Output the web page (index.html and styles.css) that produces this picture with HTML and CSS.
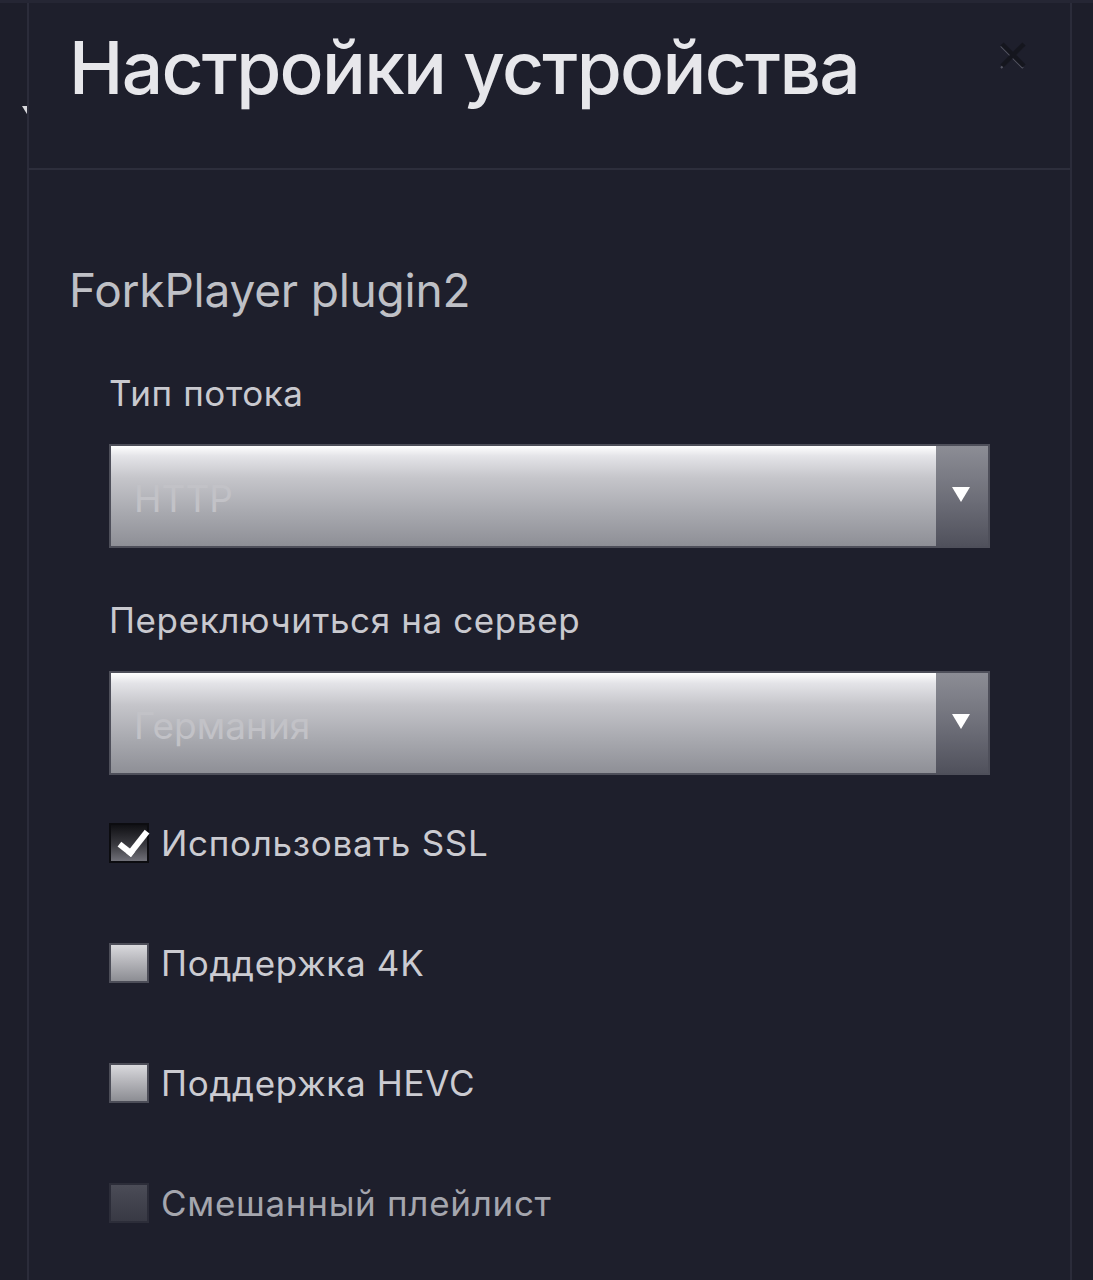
FILE: index.html
```html
<!DOCTYPE html>
<html lang="ru">
<head>
    <meta charset="UTF-8">
    <meta name="viewport" content="width=device-width, initial-scale=1.0">
    <title>Настройки устройства</title>
    <link rel="stylesheet" href="styles.css">
</head>
<body>
    <!-- page behind the dialog, only a sliver of it shows -->
    <div class="backdrop">
        <span class="backdrop-arrow"></span>
    </div>

    <div class="modal">
        <div class="modal-header">
            <h1>Настройки устройства</h1>
            <button type="button" class="close-btn" aria-label="Закрыть">
                <svg width="30" height="30" viewBox="0 0 30 30">
                    <path d="M3 5 L25 27 M25 5 L3 27" stroke="#555663" stroke-width="2" fill="none"/>
                    <path d="M4 3 L26 25 M26 3 L4 25" stroke="#15161e" stroke-width="4.5" fill="none"/>
                </svg>
            </button>
        </div>

        <div class="modal-body">
            <h2>ForkPlayer plugin2</h2>

            <form class="settings">
                <label class="field-label" for="streamType">Тип потока</label>
                <div class="select-box">
                    <select id="streamType">
                        <option>HTTP</option>
                        <option>HLS</option>
                    </select>
                    <span class="select-arrow"></span>
                </div>

                <label class="field-label" for="server">Переключиться на сервер</label>
                <div class="select-box">
                    <select id="server">
                        <option>Германия</option>
                        <option>Нидерланды</option>
                    </select>
                    <span class="select-arrow"></span>
                </div>

                <label class="check-row">
                    <input type="checkbox" checked>
                    <span class="check-box"></span>
                    Использовать SSL
                </label>

                <label class="check-row">
                    <input type="checkbox">
                    <span class="check-box"></span>
                    Поддержка 4K
                </label>

                <label class="check-row">
                    <input type="checkbox">
                    <span class="check-box"></span>
                    Поддержка HEVC
                </label>

                <label class="check-row disabled">
                    <input type="checkbox" disabled>
                    <span class="check-box"></span>
                    Смешанный плейлист
                </label>
            </form>
        </div>
    </div>
</body>
</html>
```

FILE: styles.css
```css
/* Dark TV-style settings dialog */
body {
    margin: 0;
    padding: 0;
    background-color: #1d1e2a;
    font-family: 'Inter', 'Liberation Sans', sans-serif;
    color: #c9c9cf;
    height: 1280px;
    overflow: hidden;
    border-top: 3px solid #252634;
    box-sizing: border-box;
}

.backdrop {
    position: absolute;
    top: 0;
    left: 0;
    width: 30px;
    height: 200px;
}

.backdrop-arrow {
    position: absolute;
    left: 22px;
    top: 106px;
    width: 0;
    height: 0;
    border-left: 8px solid transparent;
    border-right: 8px solid transparent;
    border-top: 13px solid #d8d8dc;
}

.modal {
    position: relative;
    margin-left: 27px;
    width: 1041px;
    height: 1277px;
    background-color: #1e1f2c;
    border-left: 2px solid #2b2c3a;
    border-right: 2px solid #2b2c3a;
}

.modal-header {
    display: flex;
    justify-content: space-between;
    align-items: flex-start;
    height: 165px;
    padding: 0 42px 0 40px;
    border-bottom: 2px solid #2d2e3c;
}

h1 {
    margin: 10px 0 0 0;
    font-size: 73px;
    font-weight: 500;
    color: #e7e7eb;
    letter-spacing: -1.7px;
    line-height: 110px;
}

.close-btn {
    margin-top: 38px;
    padding: 0;
    background: none;
    border: none;
    cursor: pointer;
}

.modal-body {
    padding: 92px 40px 0 40px;
}

h2 {
    margin: 0;
    font-size: 46px;
    font-weight: 400;
    color: #bfc0c6;
    line-height: 56px;
    letter-spacing: -0.2px;
}

.settings {
    display: flex;
    flex-direction: column;
    padding: 0 40px 0 40px;
}

.field-label {
    margin-top: 51px;
    font-size: 35px;
    line-height: 48px;
    color: #c9c9cf;
    letter-spacing: 0.6px;
}

.field-label + .select-box {
    margin-top: 27px;
}

.select-box + .field-label {
    margin-top: 48px;
}

.select-box {
    position: relative;
    height: 100px;
    border: 2px solid #4e4f5a;
    display: flex;
}

.select-box select {
    flex: 1;
    appearance: none;
    -webkit-appearance: none;
    border: none;
    outline: none;
    padding: 4px 0 0 23px;
    font-family: 'Inter', 'Liberation Sans', sans-serif;
    font-size: 37px;
    color: #c2c2c7;
    background: linear-gradient(to bottom, #ffffff 0%, #e4e4e8 10%, #c5c5ca 32%, #a9aab0 65%, #8e8f96 100%);
}

.select-arrow {
    width: 52px;
    position: relative;
    background: linear-gradient(to bottom, #8c8d95 0%, #6c6d77 55%, #50515c 100%);
}

.select-arrow::after {
    content: "";
    position: absolute;
    left: 16px;
    top: 41px;
    border-left: 9px solid transparent;
    border-right: 9px solid transparent;
    border-top: 15px solid #ffffff;
}

.check-row {
    display: flex;
    align-items: center;
    gap: 12px;
    height: 40px;
    margin-top: 80px;
    font-size: 35px;
    color: #cbcbd1;
    letter-spacing: 0.7px;
    cursor: pointer;
}

.select-box + .check-row {
    margin-top: 48px;
}

.check-row input {
    display: none;
}

.check-box {
    position: relative;
    width: 36px;
    height: 36px;
    border: 2px solid #4c4d58;
    background: linear-gradient(to bottom, #d9d9dd 0%, #b6b6bb 45%, #8c8d93 100%);
}

.check-row input:checked + .check-box {
    border-color: #0c0c10;
    background: linear-gradient(to bottom, #101014 0%, #3a3a40 55%, #707078 100%);
}

.check-row input:checked + .check-box::after {
    content: "";
    position: absolute;
    left: 14px;
    top: 0px;
    width: 11px;
    height: 24px;
    border-right: 6px solid #ffffff;
    border-bottom: 6px solid #ffffff;
    transform: rotate(38deg);
}

.check-row.disabled {
    color: #a5a6ae;
    cursor: default;
}

.check-row.disabled .check-box {
    border-color: #2c2d39;
    background: linear-gradient(to bottom, #4b4c57 0%, #41424d 50%, #383944 100%);
}
```
